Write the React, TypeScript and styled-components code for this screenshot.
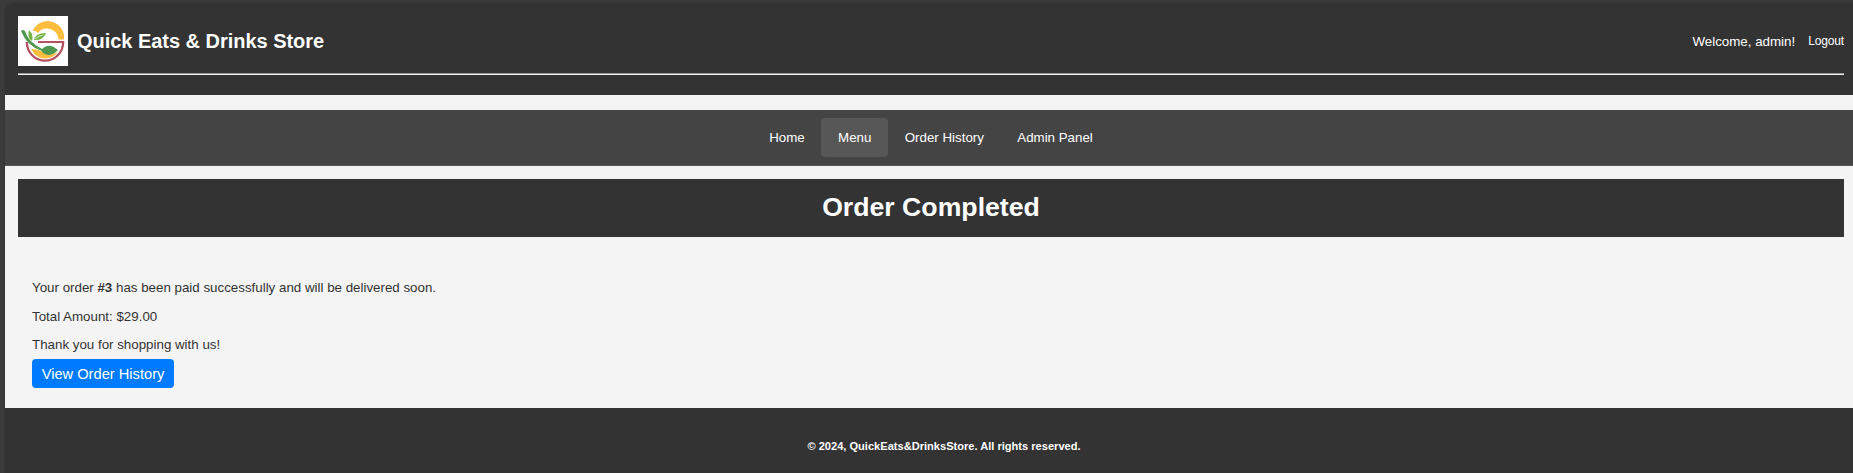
import React from 'react';
import styled, { createGlobalStyle } from 'styled-components';

const GlobalStyle = createGlobalStyle`
  * { box-sizing: border-box; }
  body {
    margin: 0;
    background: #3b3b3b;
    font-family: "Liberation Sans", Arial, sans-serif;
    font-size: 13.33px;
    color: #333;
    overflow: hidden;
  }
  h1, h2, p { margin: 0; }
  a { text-decoration: none; }
`;

const Frame = styled.div`
  height: 473px;
  padding: 3px 0 0 5px;
`;

const Page = styled.div`
  height: 470px;
  display: flex;
  flex-direction: column;
  border-top-left-radius: 9px;
  box-shadow: 0 0 2px #303030;
`;

const Header = styled.header`
  height: 92px;
  padding: 13px 9px 0 13px;
  background: #333;
  border-top-left-radius: 9px;
`;

const HeaderRow = styled.div`
  height: 50px;
  display: flex;
  align-items: center;
`;

const StoreName = styled.h2`
  margin-left: 9px;
  font-size: 20px;
  line-height: 24px;
  letter-spacing: -0.03px;
  color: #fff;
  white-space: nowrap;
`;

const Account = styled.div`
  display: flex;
  margin-left: auto;
  padding-top: 2px;
  gap: 13px;
  color: #fff;
  line-height: 16px;
`;

const Welcome = styled.span`
  letter-spacing: 0;
`;

const Logout = styled.a`
  font-size: 12px;
  line-height: 15px;
  letter-spacing: -0.15px;
  color: #fff;
`;

const Rule = styled.div`
  margin-top: 7px;
  height: 2px;
  border-top: 1px solid #999;
  background: #eee;
`;

const Body = styled.div`
  flex: 1;
  display: flex;
  flex-direction: column;
  padding-top: 15px;
  background: #f4f4f4;
`;

const Nav = styled.nav`
  height: 56px;
  padding: 8px 0 0 4px;
  display: flex;
  justify-content: center;
  background: #444;
  border-bottom: 1px solid #555;
`;

const NavLink = styled.a<{ $active?: boolean }>`
  height: 39px;
  padding: 0 16.67px;
  border-radius: 4px;
  background: ${({ $active }) => ($active ? '#575757' : 'transparent')};
  color: #fff;
  line-height: 39px;
`;

const Title = styled.h1`
  height: 58px;
  margin: 13px 9px 0 13px;
  background: #333;
  color: #fff;
  font-size: 26.67px;
  line-height: 57px;
  text-align: center;
`;

const Content = styled.main`
  flex: 1;
  padding: 36px 27px 0;
`;

const Line = styled.p`
  height: 28.5px;
  line-height: 30px;
`;

const Button = styled.a`
  display: block;
  width: 142px;
  height: 29px;
  border-radius: 4px;
  background: #007bff;
  color: #fff;
  font-size: 14.67px;
  line-height: 30px;
  text-align: center;
`;

const Footer = styled.footer`
  height: 65px;
  padding: 31px 0 0 30px;
  background: #333;
  color: #fff;
  font-size: 11.08px;
  font-weight: bold;
  line-height: 15px;
  text-align: center;
`;

const Logo = () => (
  <svg width="50" height="50" viewBox="0 0 50 50" aria-hidden="true">
    <rect width="50" height="50" fill="#fff" />
    <path d="M14.500 15A16.500 16.500 0 0 1 46 23.500H40.500A11.500 11.500 0 0 0 20 17Q17 14 14.500 15Z" fill="#fdbd3e" />
    <path d="M13 33Q20 33 25 36Q31 41 40 36Q35 42.500 27 42.500Q18 42.500 13 33Z" fill="#fdbd3e" />
    <path d="M20 26H45.200A18.200 18.600 0 0 1 8.800 26" fill="none" stroke="#b5515f" strokeWidth="2.200" />
    <path d="M3 15Q4.500 13 7 15Q10 26 24 33Q31 26 40 34Q33 42 25 37Q24 35 23 34.500Q9 30 3 15Z" fill="#4f964e" />
    <path d="M11 14Q16 19 14 25Q9 22 11 14Z" fill="#72b342" />
    <path d="M16 24Q17 17 28 17Q25 25 16 24Z" fill="#72b342" />
    <path d="M17 23Q20 20 25 19" fill="none" stroke="#fff" strokeWidth="0.700" />
  </svg>
);

const navItems = ['Home', 'Menu', 'Order History', 'Admin Panel'];

export default function App() {
  return (
    <Frame>
      <GlobalStyle />
      <Page>
        <Header>
          <HeaderRow>
            <Logo />
            <StoreName>Quick Eats &amp; Drinks Store</StoreName>
            <Account>
              <Welcome>Welcome, admin!</Welcome>
              <Logout>Logout</Logout>
            </Account>
          </HeaderRow>
          <Rule />
        </Header>
        <Body>
          <Nav>
            {navItems.map((item) => (
              <NavLink key={item} $active={item === 'Menu'}>{item}</NavLink>
            ))}
          </Nav>
          <Title>Order Completed</Title>
          <Content>
            <Line>Your order <b>#3</b> has been paid successfully and will be delivered soon.</Line>
            <Line>Total Amount: $29.00</Line>
            <Line>Thank you for shopping with us!</Line>
            <Button>View Order History</Button>
          </Content>
        </Body>
        <Footer>© 2024, QuickEats&amp;DrinksStore. All rights reserved.</Footer>
      </Page>
    </Frame>
  );
}
